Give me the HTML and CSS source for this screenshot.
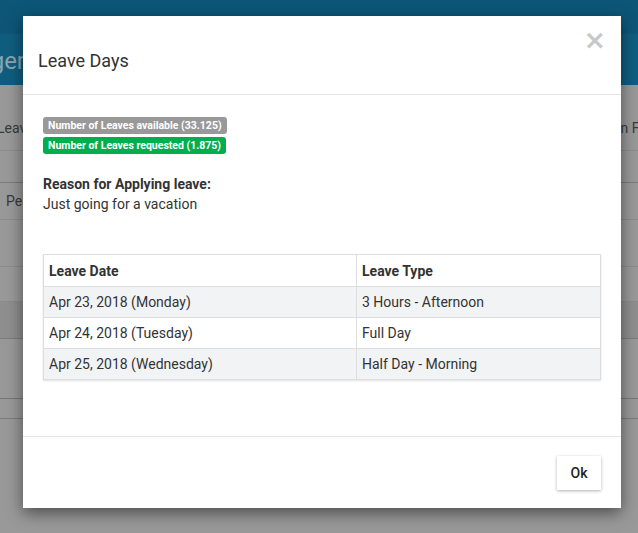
FILE: index.html
```html
<!DOCTYPE html>
<html>
<head>
<meta charset="utf-8">
<link rel="stylesheet" href="styles.css">
</head>
<body>
<div class="page">
  <div class="topbar"></div>
  <div class="pagehead"><div class="pagehead-inner"><span class="pagetitle">Leave Manager</span></div></div>
  <div class="content">
    <div class="row row-head"><span class="lt">Leave Type</span><span class="rt">Action Fr</span></div>
    <div class="row row-a"></div>
    <div class="row row-btn"><span class="btnlike">Pending</span></div>
    <div class="row row-b"></div>
    <div class="row row-c"></div>
    <div class="row row-d"></div>
    <div class="row row-e"></div>
    <div class="row row-f"></div>
  </div>
</div>

<div class="modal">
  <div class="modal-header">
    <h4 class="modal-title">Leave Days</h4>
    <span class="close">&times;</span>
  </div>
  <div class="modal-body">
    <div class="labels">
      <span class="label label-gray">Number of Leaves available (33.125)</span>
      <span class="label label-green">Number of Leaves requested (1.875)</span>
    </div>
    <div class="reason">
      <div class="reason-title">Reason for Applying leave:</div>
      <div class="reason-text">Just going for a vacation</div>
    </div>
    <table class="days">
      <thead>
        <tr><th class="c1">Leave Date</th><th>Leave Type</th></tr>
      </thead>
      <tbody>
        <tr class="odd"><td>Apr 23, 2018 (Monday)</td><td>3 Hours - Afternoon</td></tr>
        <tr><td>Apr 24, 2018 (Tuesday)</td><td>Full Day</td></tr>
        <tr class="odd"><td>Apr 25, 2018 (Wednesday)</td><td>Half Day - Morning</td></tr>
      </tbody>
    </table>
  </div>
  <div class="modal-footer">
    <button class="btn-ok">Ok</button>
  </div>
</div>
</body>
</html>
```
FILE: styles.css
```css
html, body {
  margin: 0;
  padding: 0;
  height: 100%;
  overflow: hidden;
}
body {
  font-family: Roboto, "Liberation Sans", sans-serif;
  background: #999999;
  color: #333;
}
.page {
  width: 638px;
}
.topbar {
  height: 34px;
  background: #0d5677;
}
.pagehead {
  height: 51px;
  background: #0f5e80;
  overflow: hidden;
  white-space: nowrap;
}
.pagehead-inner {
  width: 25px;
  height: 51px;
  display: flex;
  justify-content: flex-end;
  align-items: center;
}
.pagetitle {
  flex: none;
  font-size: 24px;
  line-height: 30px;
  padding-top: 2px;
  color: #8ea5b0;
}
.content {
  background: #999999;
}
.row {
  border-bottom: 1px solid #8c8c8c;
  box-sizing: border-box;
  position: relative;
}
.row-head {
  height: 66px;
  display: flex;
  justify-content: space-between;
  align-items: flex-end;
  padding-bottom: 14px;
  font-size: 14px;
  color: #3a3a3a;
  white-space: nowrap;
  overflow: hidden;
}
.row-head .lt { margin-left: -3px; }
.row-head .rt { margin-right: -6px; }
.row-a { height: 32px; border-bottom-color: #7a7a7a; }
.row-btn {
  height: 37px;
  display: flex;
  align-items: center;
  font-size: 14px;
  color: #3a3a3a;
}
.btnlike { margin-left: 6px; }
.row-b { height: 47px; }
.row-c { height: 35px; }
.row-d { height: 37px; background: #8f8f8f; border-bottom-color: #7c7c7c; }
.row-e { height: 60px; border-bottom-color: #777; }
.row-f { height: 20px; border-bottom-color: #7c7c7c; }

.modal {
  position: absolute;
  left: 23px;
  top: 16px;
  width: 598px;
  height: 492px;
  background: #fff;
  box-shadow: 0 5px 15px rgba(0, 0, 0, 0.5);
  display: flex;
  flex-direction: column;
}
.modal-header {
  position: relative;
  padding: 32px 15px 20px;
  border-bottom: 1px solid #e5e5e5;
}
.modal-title {
  margin: 0;
  font-size: 18px;
  font-weight: 400;
  line-height: 26px;
  color: #333;
}
.close {
  position: absolute;
  right: 15px;
  top: 10px;
  font-size: 27px;
  font-weight: 700;
  line-height: 28px;
  color: #c8c8c8;
  font-family: "DejaVu Sans", sans-serif;
}
.modal-body {
  flex: 1;
  padding: 22px 20px 0;
}
.labels {
  display: flex;
  flex-direction: column;
  align-items: flex-start;
  gap: 3px;
}
.label {
  display: inline-block;
  font-size: 10.5px;
  font-weight: 700;
  line-height: 17px;
  height: 17px;
  padding: 0 5px;
  border-radius: 3px;
  color: #fff;
}
.label-gray { background: #999999; }
.label-green { background: #00ae4f; }
.reason {
  margin-top: 20px;
  font-size: 14px;
  line-height: 20px;
  color: #333;
}
.reason-title { font-weight: 700; }
.days {
  margin-top: 40px;
  width: 100%;
  border-collapse: collapse;
  border: 1px solid #dddddd;
  box-shadow: 0 1px 2px rgba(0, 0, 0, 0.12);
  font-size: 14px;
  color: #333;
}
.days th, .days td {
  border: 1px solid #dddddd;
  text-align: left;
  padding: 0 5px;
  height: 30px;
}
.days th {
  font-weight: 700;
  height: 31px;
}
.days .c1 { width: 302px; }
.days tr.odd td { background: #f2f3f5; }
.modal-footer {
  border-top: 1px solid #e5e5e5;
  height: 72px;
  box-sizing: border-box;
  display: flex;
  justify-content: flex-end;
  align-items: flex-start;
  padding: 19px 20px 0;
}
.btn-ok {
  width: 44px;
  height: 34px;
  border: 0;
  background: #fff;
  box-shadow: 0 1px 3px rgba(0, 0, 0, 0.3);
  font-family: Roboto, "Liberation Sans", sans-serif;
  font-size: 14px;
  font-weight: 500;
  color: #222;
  padding: 0;
}
```
